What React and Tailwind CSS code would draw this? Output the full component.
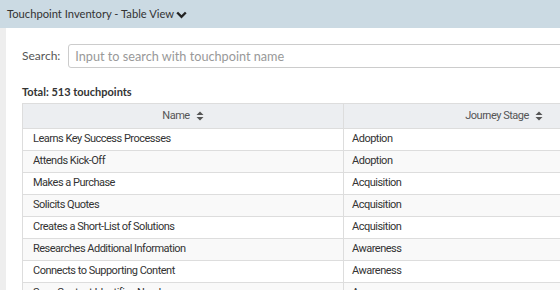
import React from "react";

const ROWS = [
  ["Learns Key Success Processes", "Adoption"],
  ["Attends Kick-Off", "Adoption"],
  ["Makes a Purchase", "Acquisition"],
  ["Solicits Quotes", "Acquisition"],
  ["Creates a Short-List of Solutions", "Acquisition"],
  ["Researches Additional Information", "Awareness"],
  ["Connects to Supporting Content", "Awareness"],
  ["Sees Content Identifies Need", "Awareness"],
];

function SortIcon() {
  return (
    <svg width="8" height="10" viewBox="0 0 8 10" className="ml-[6px] inline-block">
      <path d="M4 0.5 L7.5 4 L0.5 4 Z" fill="#555" />
      <path d="M4 9.5 L7.5 6 L0.5 6 Z" fill="#555" />
    </svg>
  );
}

export default function App() {
  return (
    <div className="h-[290px] w-[560px] overflow-hidden bg-white font-['Lato',sans-serif]">
      {/* barra titolo */}
      <div className="flex h-[28px] items-center bg-[#cbdae3] pl-[7px] text-[11.2px] text-[#333]">
        <span>Touchpoint Inventory - Table View</span>
        <svg width="11" height="8" viewBox="0 0 11 8" className="ml-[2px] mt-[2px]">
          <path d="M1.2 1.5 L5.5 5.8 L9.8 1.5" stroke="#222" strokeWidth="2.4" fill="none" />
        </svg>
      </div>

      <div className="flex h-[262px]">
        <div className="w-[6px] shrink-0 bg-[#eeeeee]" />
        <div className="min-w-0 flex-1 overflow-hidden pl-[16px] pt-[16px]">
          {/* ricerca */}
          <div className="flex items-center">
            <span className="text-[12px] text-[#555]">Search:</span>
            <input
              placeholder="Input to search with touchpoint name"
              className="ml-[8px] h-[24px] w-[520px] shrink-0 rounded-[3px] border border-[#ccc] px-[6px] text-[12.7px] text-[#333] placeholder-[#999] outline-none"
            />
          </div>

          <div className="mt-[16px] text-[11px] font-bold leading-[16px] text-[#333]">
            Total: 513 touchpoints
          </div>

          {/* tabella */}
          <table className="mt-[3px] w-[642px] table-fixed border-collapse font-['Roboto',sans-serif] text-[11px] tracking-[-0.5px] text-[#333]">
            <thead>
              <tr className="h-[25px] bg-[#eceef1] text-[#555]">
                <th className="w-[321px] border border-[#ddd] font-normal">
                  <span className="inline-flex items-center">Name<SortIcon /></span>
                </th>
                <th className="w-[321px] border border-[#ddd] font-normal">
                  <span className="inline-flex items-center">Journey Stage<SortIcon /></span>
                </th>
              </tr>
            </thead>
            <tbody>
              {ROWS.map(([name, stage], i) => (
                <tr key={name} className={"h-[22px] " + (i % 2 === 1 ? "bg-[#f9f9f9]" : "bg-white")}>
                  <td className="border border-[#ddd] pl-[10px]">{name}</td>
                  <td className="border border-[#ddd] pl-[8px]">{stage}</td>
                </tr>
              ))}
            </tbody>
          </table>
        </div>
      </div>
    </div>
  );
}
